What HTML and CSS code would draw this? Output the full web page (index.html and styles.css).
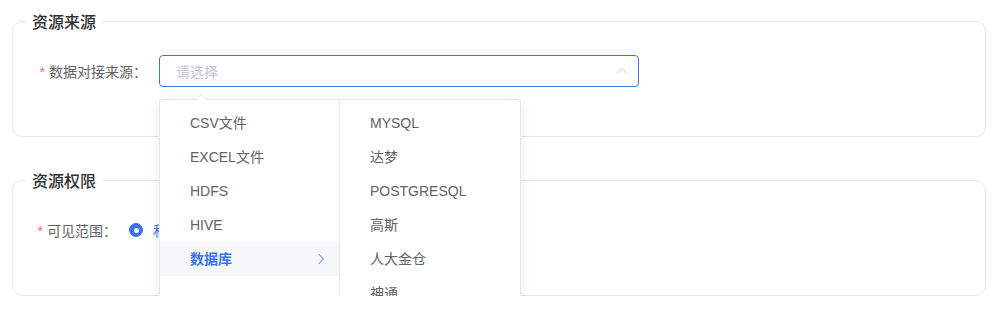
FILE: index.html
```html
<!DOCTYPE html>
<html lang="zh-CN">
<head>
<meta charset="utf-8">
<title>资源</title>
<link rel="stylesheet" href="styles.css">
</head>
<body>
  <fieldset class="card">
    <legend class="card-title">资源来源</legend>
    <div class="form-item">
      <label class="form-label label-wide"><span class="req">*</span>数据对接来源：</label>
      <div class="select-wrap">
        <div class="select is-focus">
          <span class="placeholder">请选择</span>
          <svg class="select-arrow" width="12" height="8" viewBox="0 0 12 8"><path d="M1 6.5 L6 1.5 L11 6.5" fill="none" stroke="#c0c4cc" stroke-width="1"/></svg>
        </div>
        <div class="cascader-panel">
          <span class="popper-arrow"></span>
          <div class="cascader-menus">
            <ul class="menu menu-first">
              <li class="node"><span class="node-label">CSV文件</span></li>
              <li class="node"><span class="node-label">EXCEL文件</span></li>
              <li class="node"><span class="node-label">HDFS</span></li>
              <li class="node"><span class="node-label">HIVE</span></li>
              <li class="node is-active"><span class="node-label">数据库</span>
                <svg class="node-postfix" width="8" height="12" viewBox="0 0 8 12"><path d="M1.5 1 L6.5 6 L1.5 11" fill="none" stroke="#3a74e8" stroke-width="1"/></svg>
              </li>
            </ul>
            <ul class="menu">
              <li class="node"><span class="node-label">MYSQL</span></li>
              <li class="node"><span class="node-label">达梦</span></li>
              <li class="node"><span class="node-label">POSTGRESQL</span></li>
              <li class="node"><span class="node-label">高斯</span></li>
              <li class="node"><span class="node-label">人大金仓</span></li>
              <li class="node"><span class="node-label">神通</span></li>
            </ul>
          </div>
        </div>
      </div>
    </div>
  </fieldset>

  <fieldset class="card card-second">
    <legend class="card-title">资源权限</legend>
    <div class="form-item">
      <label class="form-label label-narrow"><span class="req">*</span>可见范围：</label>
      <div class="radio-group">
        <label class="radio is-checked"><span class="radio-inner"></span><span class="radio-text">私有</span></label>
      </div>
    </div>
  </fieldset>
</body>
</html>
```

FILE: styles.css
```css
* { box-sizing: border-box; }

html, body {
  margin: 0;
  background: #ffffff;
}

body {
  padding: 9px 15px 0 12px;
  font-family: "Liberation Sans", "Noto Sans CJK SC", sans-serif;
  font-size: 14px;
  color: #606266;
}

.card {
  margin: 0;
  padding: 22px 0 49px 0;
  min-width: 0;
  border: 1px solid #e4e7ed;
  border-radius: 10px;
}

.card-second {
  margin-top: 31px;
}

.card-title {
  margin-left: 13px;
  padding: 0 6px;
  font-size: 16px;
  line-height: 24px;
  font-weight: 500;
  color: #303133;
  font-family: "Noto Sans CJK SC", sans-serif;
}

.form-item {
  display: flex;
  align-items: center;
  height: 32px;
}

.form-label {
  flex: none;
  text-align: right;
  padding-right: 12px;
  line-height: 32px;
  color: #606266;
  font-family: "Noto Sans CJK SC", sans-serif;
}

.label-wide { width: 146px; }
.label-narrow { width: 116px; }

.req {
  color: #f56c6c;
  margin-right: 4px;
  font-family: "Liberation Sans", sans-serif;
}

.select-wrap {
  position: relative;
  width: 480px;
}

.select {
  display: flex;
  align-items: center;
  justify-content: space-between;
  height: 32px;
  padding: 0 10px 0 16px;
  border: 1px solid #dcdfe6;
  border-radius: 4px;
  background: #fff;
}

.select.is-focus {
  border-color: #3a74e8;
}

.placeholder {
  color: #c0c4cc;
  font-family: "Noto Sans CJK SC", sans-serif;
}

.select-arrow {
  display: block;
}

.cascader-panel {
  position: absolute;
  top: 44px;
  left: 0;
  z-index: 10;
  background: #fff;
  border: 1px solid #e4e7ed;
  border-radius: 4px;
  box-shadow: 0 2px 12px 0 rgba(0, 0, 0, 0.1);
}

.popper-arrow {
  position: absolute;
  top: -6px;
  left: 35px;
  width: 0;
  height: 0;
  border-left: 6px solid transparent;
  border-right: 6px solid transparent;
  border-bottom: 6px solid #e4e7ed;
}

.popper-arrow::after {
  content: "";
  position: absolute;
  top: 1px;
  left: -5px;
  border-left: 5px solid transparent;
  border-right: 5px solid transparent;
  border-bottom: 5px solid #fff;
}

.cascader-menus {
  display: flex;
}

.menu {
  list-style: none;
  margin: 0;
  padding: 6px 0;
  width: 180px;
  height: 204px;
  overflow: hidden;
}

.menu-first {
  border-right: 1px solid #e4e7ed;
}

.node {
  position: relative;
  display: flex;
  align-items: center;
  height: 34px;
  padding: 0 30px 0 20px;
  color: #606266;
  white-space: nowrap;
}

.node-label {
  padding: 0 10px;
  line-height: 34px;
}

.node.is-active {
  background: #f5f7fa;
  color: #3a74e8;
  font-weight: 700;
}

.node-postfix {
  position: absolute;
  right: 14px;
  top: 11px;
}

.radio-group {
  display: flex;
  align-items: center;
}

.radio {
  display: flex;
  align-items: center;
  margin-right: 30px;
  font-family: "Noto Sans CJK SC", sans-serif;
}

.radio-inner {
  position: relative;
  width: 14px;
  height: 14px;
  border-radius: 50%;
  border: 1px solid #dcdfe6;
  background: #fff;
}

.radio.is-checked .radio-inner {
  border-color: #3a74e8;
  background: #3a74e8;
}

.radio.is-checked .radio-inner::after {
  content: "";
  position: absolute;
  left: 50%;
  top: 50%;
  width: 5px;
  height: 5px;
  margin: -2.5px 0 0 -2.5px;
  border-radius: 50%;
  background: #fff;
}

.radio-text {
  padding-left: 10px;
  color: #3a74e8;
}
```
